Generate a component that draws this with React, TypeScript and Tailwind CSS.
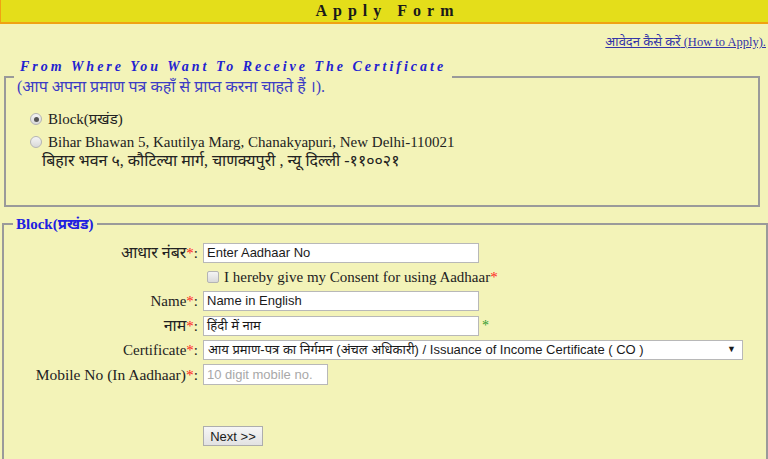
import React from 'react';

const serif = "font-['Liberation_Serif','Times_New_Roman','Noto_Sans',serif]";
const sans = "font-['Liberation_Sans',Arial,'Noto_Sans',sans-serif]";

function Star({ green }: { green?: boolean }) {
  return <span className={green ? 'text-[#2f9a2f]' : 'text-[#ff2020]'}>*</span>;
}

function Radio({ checked }: { checked?: boolean }) {
  return (
    <span className="flex h-[12px] w-[12px] shrink-0 items-center justify-center rounded-full border border-[#b4b4b4] bg-gradient-to-b from-[#f4f4f4] to-[#d9d9d9]">
      {checked && <span className="h-[5px] w-[5px] rounded-full bg-[#555]" />}
    </span>
  );
}

function TextBox({ value, placeholder, width }: { value?: string; placeholder?: string; width: string }) {
  return (
    <div
      className={`flex h-[20px] items-center border border-[#b8b8b8] bg-white px-[3px] text-[13px] ${sans} ${width} ${
        value ? 'text-[#1a1a1a]' : 'text-[#a8a8a8]'
      }`}
    >
      {value ?? placeholder}
    </div>
  );
}

function Label({ children }: { children: React.ReactNode }) {
  return <div className={`text-right text-[15px] leading-[20px] text-[#222] ${serif}`}>{children}</div>;
}

export default function App() {
  return (
    <div className={`min-h-[459px] w-[768px] overflow-hidden bg-[#f3f3b8] ${serif}`}>
      {/* header */}
      <div className="flex h-[24px] items-center justify-center border-b-2 border-l border-[#f0a212] bg-[#e4de1a]">
        <span className="pl-[6px] text-[16px] font-bold tracking-[6px] text-[#1a1a1a]">Apply Form</span>
      </div>

      <div className="mt-[10px] pr-[2px] text-right text-[12.5px] leading-[16px]">
        <a href="#" className="text-[#3434a8] underline">
          <span className="text-[13px]">आवेदन कैसे करें</span> (How to Apply).
        </a>
      </div>

      {/* receive location */}
      <fieldset className="ml-[4px] mt-[7px] w-[756px] border-2 border-[#9a9a9a] pb-[35px]">
        <legend className="ml-[8px] px-[6px]">
          <div className="text-[14px] font-bold italic leading-[20px] tracking-[3px] text-[#2222d0]">
            From Where You Want To Receive The Certificate
          </div>
          <div className="-ml-[3px] text-[16px] leading-[20px] text-[#3c3cc4]">
            (आप अपना प्रमाण पत्र कहाँ से प्राप्त करना चाहते हैं ।).
          </div>
        </legend>
        <div className="ml-[24px] mt-[12px] flex h-[20px] items-center gap-[6px] text-[15px] text-[#222]">
          <Radio checked />
          <span>Block(प्रखंड)</span>
        </div>
        <div className="ml-[24px] mt-[3px] flex h-[20px] items-center gap-[6px] text-[15px] text-[#222]">
          <Radio />
          <span>Bihar Bhawan 5, Kautilya Marg, Chanakyapuri, New Delhi-110021</span>
        </div>
        <div className="ml-[36px] text-[16px] leading-[18px] text-[#222]">
          बिहार भवन ५, कौटिल्या मार्ग, चाणक्यपुरी , न्यू दिल्ली -११००२१
        </div>
      </fieldset>

      {/* block form */}
      <fieldset className="ml-[2px] mt-[7px] w-[766px] border-2 border-[#9a9a9a] pb-[40px] pt-[9px]">
        <legend className="ml-[9px] px-[3px] text-[15px] font-bold leading-[20px] text-[#2020e0]">Block(प्रखंड)</legend>

        <div className="grid grid-cols-[194px_1fr] items-center gap-x-[5px] gap-y-[4px]">
          <Label>
            <span className="text-[16px]">आधार नंबर</span>
            <Star />:
          </Label>
          <TextBox value="Enter Aadhaar No" width="w-[276px]" />

          <div />
          <div className={`flex h-[20px] items-center gap-[5px] pl-[4px] text-[15px] text-[#222] ${serif}`}>
            <span className="h-[12px] w-[12px] rounded-[2px] border border-[#b4b4b4] bg-gradient-to-b from-[#f4f4f4] to-[#dadada]" />
            <span>
              I hereby give my Consent for using Aadhaar
              <Star />
            </span>
          </div>

          <Label>
            Name<Star />:
          </Label>
          <TextBox value="Name in English" width="w-[276px]" />

          <Label>
            <span className="text-[16px]">नाम</span>
            <Star />:
          </Label>
          <div className="flex items-center gap-[3px]">
            <TextBox value="हिंदी में नाम" width="w-[276px]" />
            <span className="text-[14px]">
              <Star green />
            </span>
          </div>

          <Label>
            Certificate<Star />:
          </Label>
          <div
            className={`flex h-[20px] w-[540px] items-center justify-between border border-[#b8b8b8] bg-white pl-[4px] pr-[6px] text-[13px] text-[#1a1a1a] ${sans}`}
          >
            <span>आय प्रमाण-पत्र का निर्गमन (अंचल अधिकारी) / Issuance of Income Certificate ( CO )</span>
            <span className="text-[9px]">▼</span>
          </div>

          <Label>
            <span className="text-[15.5px]">
              Mobile No (In Aadhaar)<Star />:
            </span>
          </Label>
          <div className="h-[21px]">
            <TextBox placeholder="10 digit mobile no." width="w-[125px] h-[21px] text-[12px]" />
          </div>
        </div>

        <div className="ml-[199px] mt-[39px]">
          <button
            className={`h-[20px] w-[60px] border border-[#adadad] bg-gradient-to-b from-[#f6f6f6] to-[#e2e2e2] text-[13px] text-[#1a1a1a] ${sans}`}
          >
            Next &gt;&gt;
          </button>
        </div>
      </fieldset>
    </div>
  );
}
